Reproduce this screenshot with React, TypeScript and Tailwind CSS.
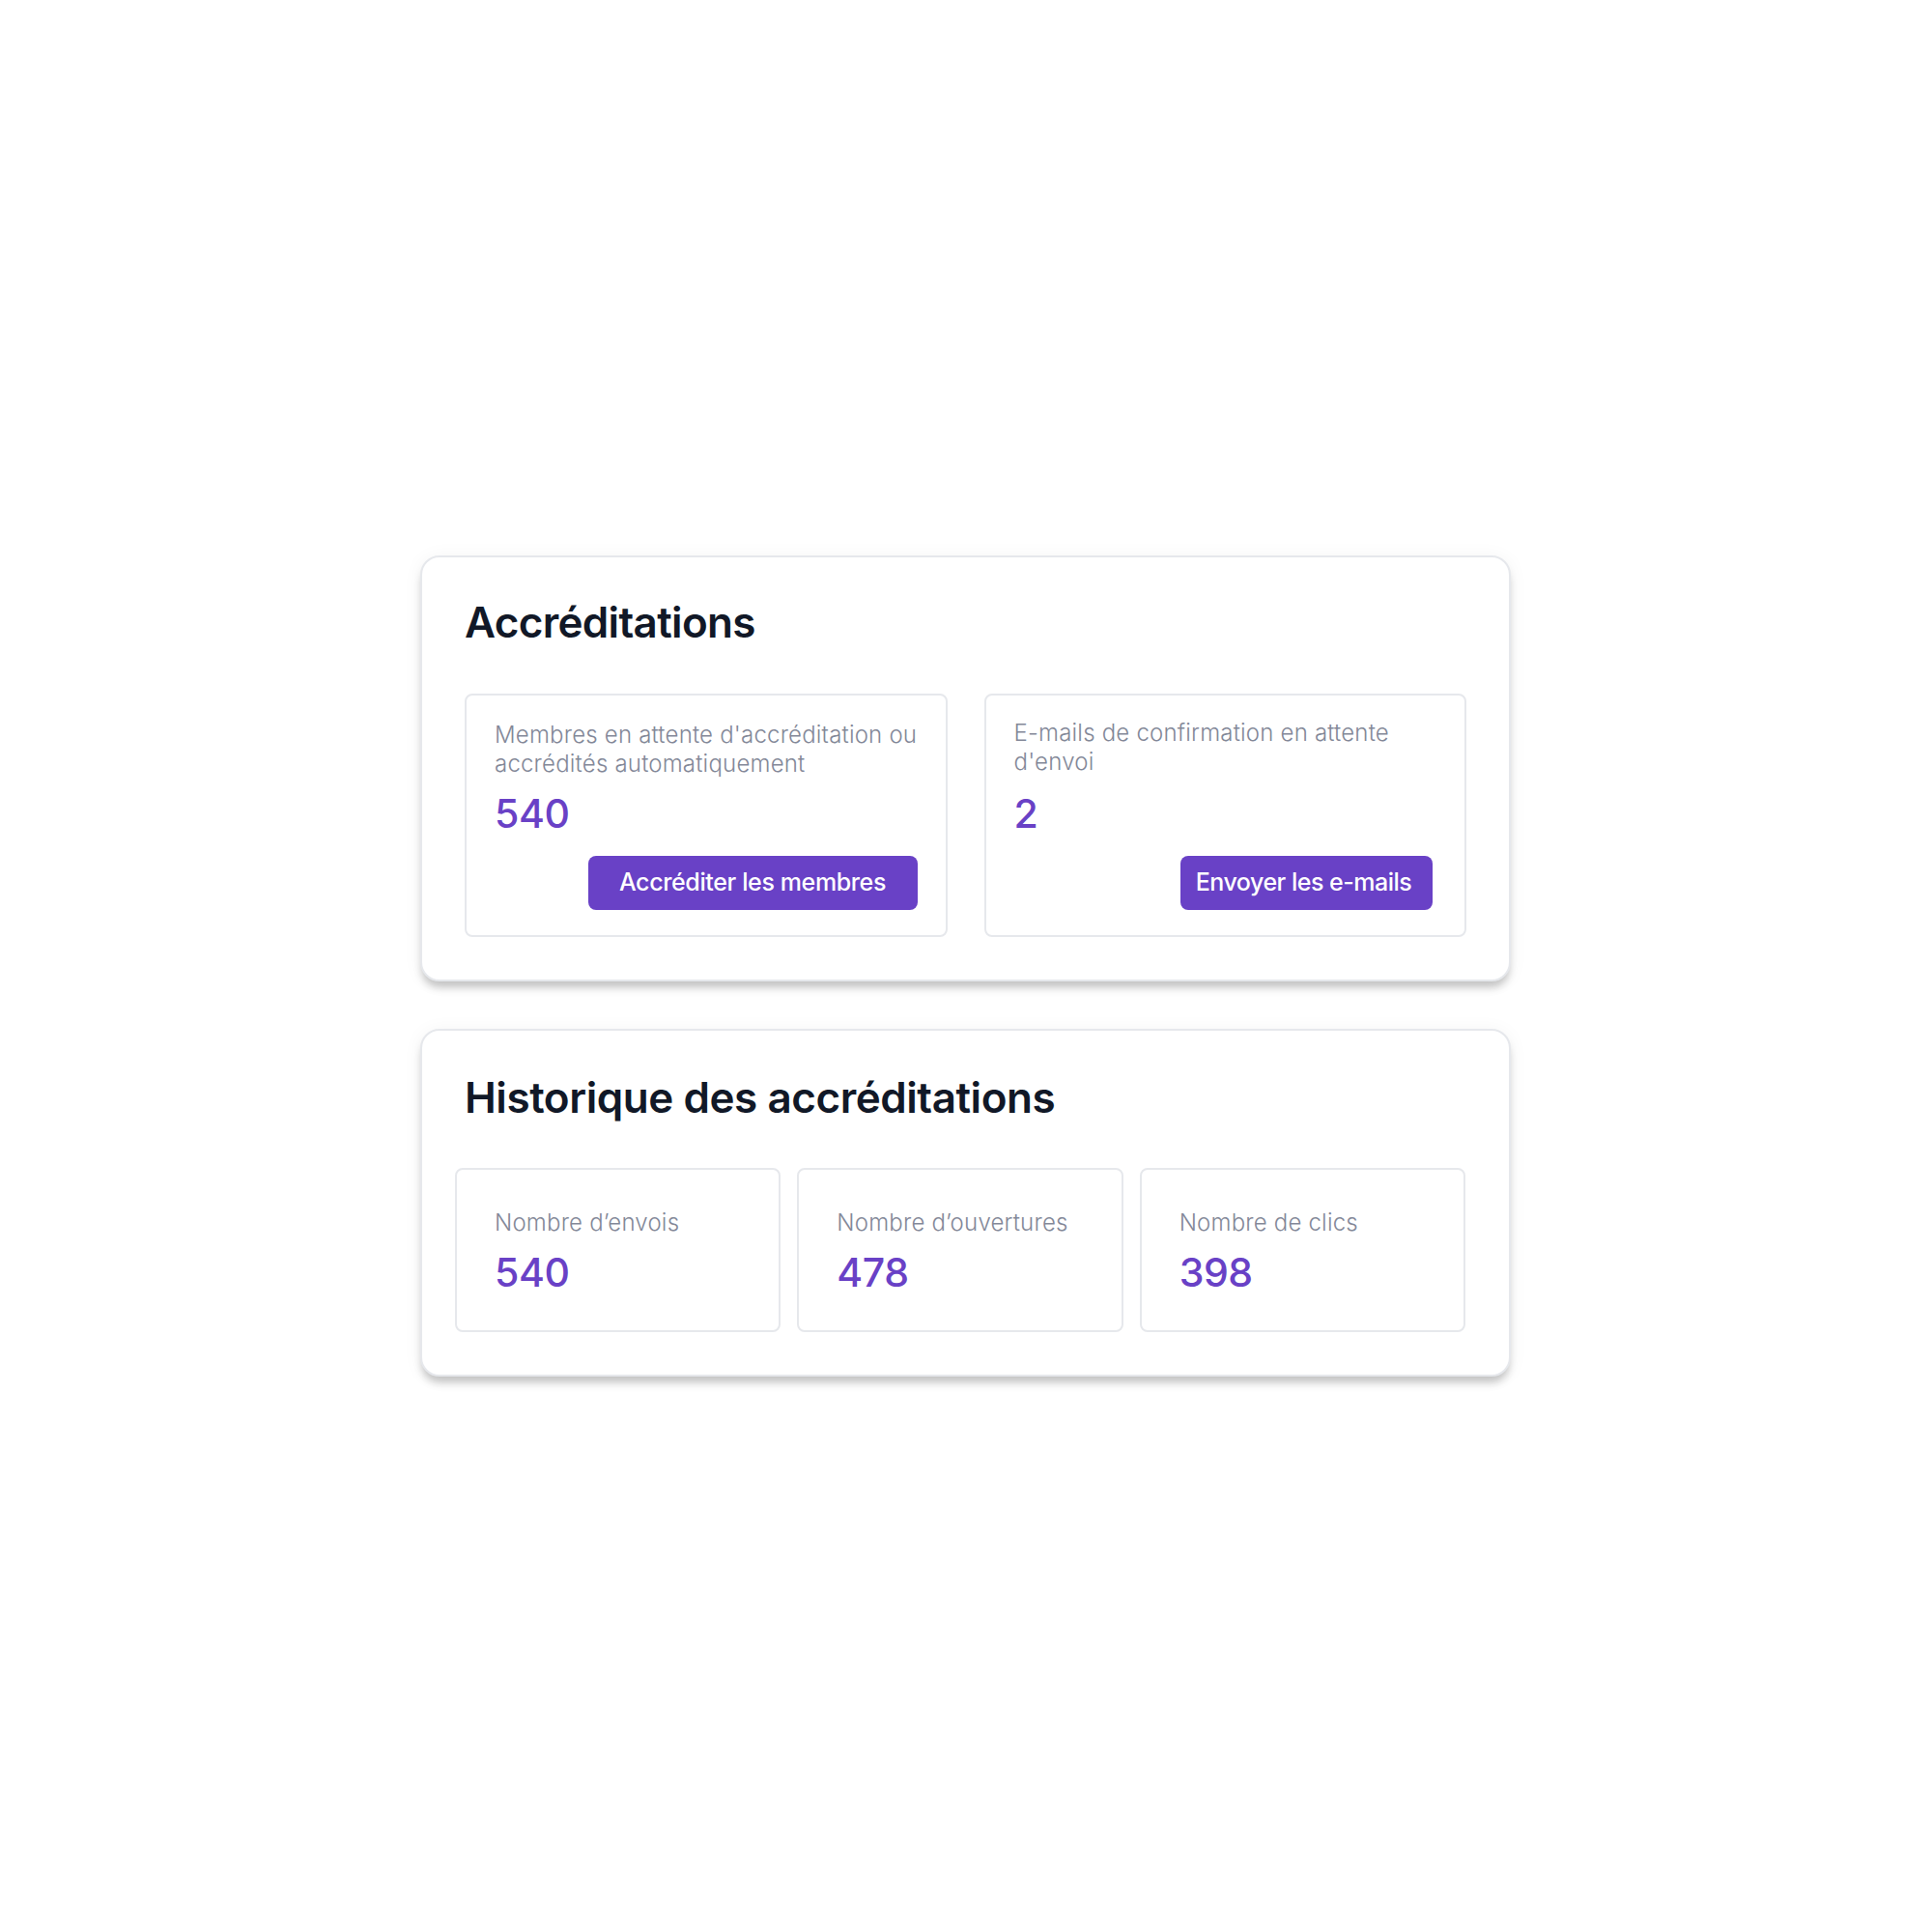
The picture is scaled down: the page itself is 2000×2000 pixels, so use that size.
export default function App() {
  const font = { fontFamily: 'Inter, "Noto Sans", sans-serif' };

  return (
    <div className="min-h-[2000px] w-[2000px] bg-white" style={font}>
      <div className="flex w-[1129px] flex-col gap-[49px] pl-0 pt-[575px] ml-[435px]">
        {/* Accréditations */}
        <section className="rounded-[20px] border-2 border-[#e6e8ec] bg-white px-[44px] pb-[44px] pt-[45px] shadow-[0_8px_8px_-2px_rgba(0,0,0,0.22),0_2px_20px_rgba(0,0,0,0.05)]">
          <h2 className="text-[44px] font-semibold leading-[44px] tracking-[-0.015em] text-[#111827]">
            Accréditations
          </h2>
          <div className="mt-[52px] grid grid-cols-2 gap-[38px]">
            <div className="flex h-[252px] flex-col rounded-[8px] border-2 border-[#e6e8ec] pb-[26px] pl-[29px] pr-[29px] pt-[26px]">
              <p className="whitespace-nowrap text-[24px] font-light leading-[30px] tracking-[0.2px] text-[#838898]">
                Membres en attente d'accréditation ou
                <br />
                accrédités automatiquement
              </p>
              <div className="mt-[16px] text-[41px] font-medium leading-[40px] tracking-[-0.01em] text-[#6941c6]">540</div>
              <button className="ml-auto mt-auto h-[56px] w-[341px] rounded-[8px] bg-[#6941c6] text-[25px] font-medium tracking-[-0.015em] text-white">
                Accréditer les membres
              </button>
            </div>
            <div className="flex h-[252px] flex-col rounded-[8px] border-2 border-[#e6e8ec] pb-[26px] pl-[29px] pr-[33px] pt-[24px]">
              <p className="whitespace-nowrap text-[24px] font-light leading-[30px] tracking-[0.2px] text-[#838898]">
                E-mails de confirmation en attente
                <br />
                d'envoi
              </p>
              <div className="mt-[18px] text-[41px] font-medium leading-[40px] tracking-[-0.01em] text-[#6941c6]">2</div>
              <button className="ml-auto mt-auto h-[56px] w-[261px] rounded-[8px] bg-[#6941c6] pr-[6px] text-[25px] font-medium tracking-[-0.02em] text-white">
                Envoyer les e-mails
              </button>
            </div>
          </div>
        </section>

        {/* Historique */}
        <section className="rounded-[20px] border-2 border-[#e6e8ec] bg-white pb-[44px] pl-[34px] pr-[45px] pt-[47px] shadow-[0_8px_8px_-2px_rgba(0,0,0,0.22),0_2px_20px_rgba(0,0,0,0.05)]">
          <h2 className="pl-[10px] text-[44px] font-semibold leading-[44px] tracking-[-0.01em] text-[#111827]">
            Historique des accréditations
          </h2>
          <div className="mt-[51px] grid grid-cols-3 gap-[17px]">
            {[
              ['Nombre d’envois', '540'],
              ['Nombre d’ouvertures', '478'],
              ['Nombre de clics', '398'],
            ].map(([label, value]) => (
              <div key={label} className="h-[170px] rounded-[8px] border-2 border-[#e6e8ec] pl-[39px] pt-[40px]">
                <p className="text-[24px] font-light leading-[30px] tracking-[0.2px] text-[#838898]">{label}</p>
                <div className="mt-[16px] text-[41px] font-medium leading-[40px] tracking-[-0.01em] text-[#6941c6]">{value}</div>
              </div>
            ))}
          </div>
        </section>
      </div>
    </div>
  );
}
